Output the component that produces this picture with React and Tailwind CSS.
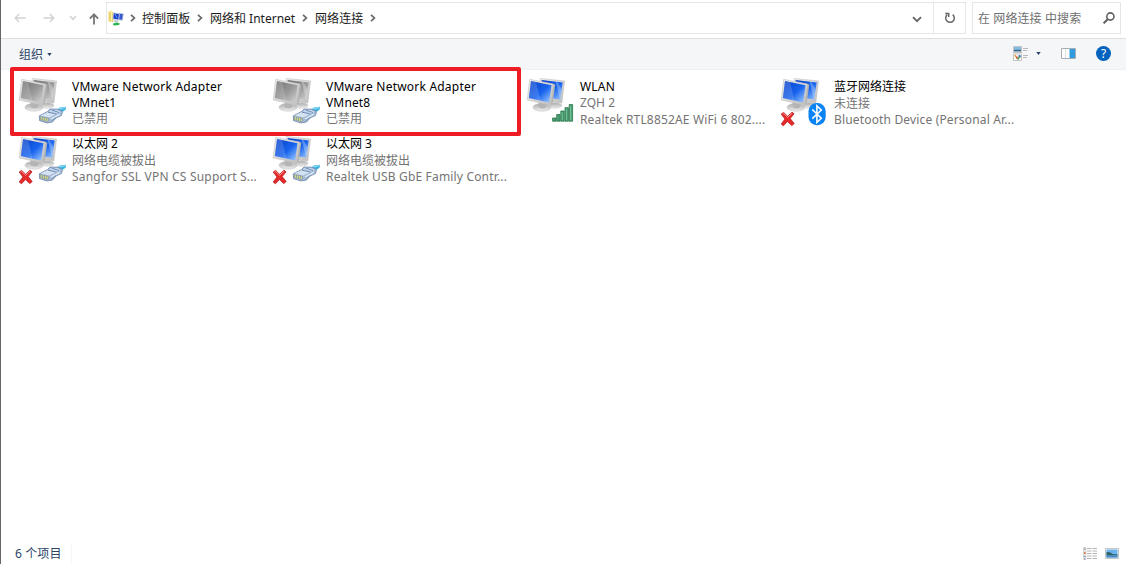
import React from "react";

const screens = {
  blue: { a: "#0a3fc4", b: "#1763ee", c: "#a6d0ff", glare: "#cfe2ff" },
  gray: { a: "#6f6f6f", b: "#9a9a9a", c: "#d6d6d6", glare: "#ececec" },
};

function Chevron({ className = "" }) {
  return (
    <svg viewBox="0 0 6 8" className={"h-2 w-1.5 shrink-0 " + className} fill="none" stroke="#666" strokeWidth="1.7">
      <path d="M1 .8 4.4 4 1 7.2" />
    </svg>
  );
}

function Plug() {
  return (
    <g strokeLinejoin="round">
      <path d="M38.5 34.5 41.5 31.5 48 30.8 47.6 33.8 43.5 36.5Z" fill="#3fb4e2" />
      <path d="M40 33.2 47 31.6" stroke="#9be2f7" strokeWidth="1" />
      <path d="M21.3 39.8 29.5 35.5 32 33 40 33.2 44.5 35.5 43.5 39.5 38 42 34.5 46 29 47 21.5 44.6Z" fill="#a5bbd8" stroke="#6d87aa" strokeWidth=".8" />
      <path d="M22.3 39.6 30 36 38.5 37.8 31.3 41.4Z" fill="#d5e2f1" />
      <path d="M32 34.2 39.4 34 43 36 38.6 37.4 31 35.6Z" fill="#c3d8ef" />
      <path d="M30 36.2 38.3 38M34 34.2 41 36.5" stroke="#5d7ca8" strokeWidth=".8" fill="none" />
      <path d="M22 40.2 31 41.9 30.4 46 22.2 44Z" fill="#8d9f9d" />
      <path d="M23.4 41.2v2.5M25.4 41.6v2.7M27.4 42v2.8M29.3 42.4v2.8" stroke="#dce182" strokeWidth="1" />
      <path d="m33 43 8.8-4.7" stroke="#e6f0fa" strokeWidth="1.3" />
      <path d="m33.5 45 4.5-3.6" stroke="#7692b7" strokeWidth=".8" />
    </g>
  );
}

function Monitors({ tone, badge, cross, id }) {
  const c = screens[tone];
  return (
    <svg viewBox="0 0 50 51" className="h-[51px] w-[50px] shrink-0">
      <defs>
        <linearGradient id={id + "s"} x1="0" y1="0" x2="1" y2="1">
          <stop offset="0" stopColor={c.a} />
          <stop offset=".55" stopColor={c.b} />
          <stop offset="1" stopColor={c.c} />
        </linearGradient>
        <linearGradient id={id + "f"} x1="0" y1="0" x2="1" y2="1">
          <stop offset="0" stopColor="#f0f0f0" />
          <stop offset="1" stopColor="#bdbdbd" />
        </linearGradient>
        <linearGradient id={id + "b"} x1="0" y1="0" x2="0" y2="1">
          <stop offset="0" stopColor="#aaa" />
          <stop offset="1" stopColor="#eee" />
        </linearGradient>
      </defs>
      <ellipse cx="29" cy="29.5" rx="7" ry="2.8" fill={"url(#" + id + "b)"} stroke="#ccc" strokeWidth=".5" />
      <path d="M14.2 2.5 38.6 5 35.8 27 26 26 14 20Z" fill={"url(#" + id + "f)"} stroke="#c0c0c0" strokeWidth=".6" strokeLinejoin="round" />
      <path d="M15.6 3.9 36.7 6.4 34.2 23.6 16 21Z" fill={"url(#" + id + "s)"} />
      <path d="m29.5 5.6 2 .3 4.2 7.5-1.5 10.2Z" fill={c.glare} opacity=".35" />
      <ellipse cx="16" cy="31.3" rx="9" ry="3.9" fill={"url(#" + id + "b)"} stroke="#c4c4c4" strokeWidth=".6" />
      <path d="m12.5 25 8 2-.8 4.8c-2 1-5.4.5-6.7-.5Z" fill="#b4b4b4" />
      <path d="m27.3 8 2 .6-2.7 19.6-2.2.8Z" fill="#b2b2b2" />
      <path d="M3.7 3.3 27.5 8 24.8 29 1.2 24Z" fill={"url(#" + id + "f)"} stroke="#c4c4c4" strokeWidth=".6" strokeLinejoin="round" />
      <path d="M5 5 25.5 9.3 23.1 26.5 2.9 22Z" fill={"url(#" + id + "s)"} />
      <path d="M5 5 10 6.1 14.5 24.6 2.9 22Z" fill={c.glare} opacity=".2" />
      {badge === "plug" && <Plug />}
      {badge === "signal" && (
        <g fill="#4aa074" stroke="#2a7549" strokeWidth=".8">
          <path d="M26.6 42h3.4v3.2h-3.4zM30.7 38.5h3.4v6.7h-3.4zM34.8 35h3.4v10.2h-3.4zM39 31.7h3.4v13.5H39zM43.2 28.6h3.4v16.6h-3.4z" />
          <path d="M36.2 36.3v8M40.4 33v11.3M44.6 29.9v14.4" stroke="#8bd0ac" strokeWidth=".7" />
        </g>
      )}
      {badge === "bluetooth" && (
        <g>
          <rect x="28.5" y="27" width="17.2" height="22.2" rx="8.2" fill="#0a84f5" />
          <path d="m32.3 33.5 9 8.8-4.4 4.2V29.8l4.4 4.2-9 8.6" fill="none" stroke="#fff" strokeWidth="1.6" />
        </g>
      )}
      {cross && (
        <g strokeLinejoin="round">
          <path d="M1.2 38 3.6 36.4 7.6 40.3 12 36.2 14 37.8 10.2 42.6 14.2 47.6 11.8 49.6 7.5 45.6 3.4 49.8 1.2 48 5 43Z" fill="#e62a2a" stroke="#bd1b1e" strokeWidth=".8" />
          <path d="m2.6 38 1-.6 4 3.9 4.3-4" fill="none" stroke="#f69a92" strokeWidth="1" />
        </g>
      )}
    </svg>
  );
}

function Adapter({ id, name, status, device, tone = "blue", badge, cross, wide, textClass = "pt-[2px]" }) {
  return (
    <div className="flex h-[58px] w-[254px] gap-1">
      <Monitors id={id} tone={tone} badge={badge} cross={cross} />
      <div className={"flex flex-col whitespace-pre text-[12px] leading-[16.5px] text-[#747474] " + textClass}>
        <div className="text-black">{name}</div>
        {wide && <div className="-mt-px tracking-[0.15px] text-black">{wide}</div>}
        <div>{status}</div>
        {device}
      </div>
    </div>
  );
}

export default function App() {
  return (
    <div className="relative flex h-[564px] w-[1126px] flex-col overflow-hidden border-l border-[#666] bg-white font-['Noto_Sans','Noto_Sans_CJK_SC',sans-serif] text-[12px]">
      <header className="flex h-[39px] shrink-0 items-start border-b border-[#dcdfe2] pt-[2px]">
        <div className="flex h-8 w-[105px] items-center pl-[13px]">
          <svg viewBox="0 0 12 10" className="h-2.5 w-3" fill="none" stroke="#d2d2d2" strokeWidth="1.5"><path d="M11.5 5H1.2M5.2 1 1.2 5l4 4" /></svg>
          <svg viewBox="0 0 12 10" className="ml-[17px] h-2.5 w-3" fill="none" stroke="#d2d2d2" strokeWidth="1.5"><path d="M.5 5h10.3M6.8 1l4 4-4 4" /></svg>
          <svg viewBox="0 0 8 6" className="ml-[14px] h-1.5 w-2" fill="none" stroke="#d2d2d2" strokeWidth="1.5"><path d="m1 1 3 3.3L7 1" /></svg>
          <svg viewBox="0 0 10 12" className="ml-3 mt-[2px] h-3 w-2.5" fill="none" stroke="#757575" strokeWidth="1.8"><path d="M5 11.6V1.5M.9 5.6 5 1.3l4.1 4.3" /></svg>
        </div>
        <div className="flex h-8 w-[860px] items-center border border-[#e6e6e6] pl-px text-[#1b1b1b]">
          <svg viewBox="0 0 16 16" className="-mt-px h-4 w-4 shrink-0">
            <path d="M.5 1.5 3.6.4 5.3 3v9L.5 11.4Z" fill="#ecd36d" />
            <path d="m1 2 2.5-.8v10" stroke="#fff0a7" fill="none" />
            <path d="m9.5 3.1 5.8.7-.8 6.4-4.8-.5Z" fill="#3359cd" stroke="#c8cfdf" strokeWidth=".8" />
            <path d="m5.4 2.8 6 1-.8 6.1-5.7-1Z" fill="#173ecb" stroke="#c8cfdf" strokeWidth=".9" />
            <path d="m7 4 2 4" stroke="#7ea3f2" strokeWidth=".9" />
            <ellipse cx="8" cy="11.2" rx="2.6" ry="1" fill="#bfc7d3" />
            <path d="m4.8 13.8 3.8-1.2 3.2.8-.8 1.7-5.2.3Z" fill="#25b24b" />
          </svg>
          <Chevron className="ml-[6px]" />
          <span className="ml-[6px] w-[49px] pt-[2px] tracking-[0.1px]">控制面板</span>
          <Chevron className="ml-[6px]" />
          <span className="ml-[7px] w-[86px] whitespace-pre pt-[2px]">网络和 Internet</span>
          <Chevron className="ml-[6px]" />
          <span className="ml-[7px] w-[49px] pt-[2px] tracking-[0.1px]">网络连接</span>
          <Chevron className="ml-[6px]" />
          <div className="ml-auto flex h-full items-center">
            <svg viewBox="0 0 10 7" className="mr-[11px] mt-[2px] h-[7px] w-2.5" fill="none" stroke="#666" strokeWidth="1.9"><path d="m1 1.2 4 4 4-4" /></svg>
            <div className="flex h-full w-8 items-center justify-center border-l border-[#e6e6e6]">
              <svg viewBox="0 0 12 12" className="h-3 w-3" fill="none" stroke="#666" strokeWidth="1.5"><path d="M8.7 2.7a4.3 4.3 0 1 1-5.5.1M1.2 1.4h3.5v3.5" /></svg>
            </div>
          </div>
        </div>
        <div className="ml-[6px] flex h-8 w-[149px] items-center justify-between border border-[#e6e6e6] pl-[5px] pr-[5px] text-[#707070]">
          <span className="whitespace-pre pt-[2px] tracking-[0.1px]">在 网络连接 中搜索</span>
          <svg viewBox="0 0 12 12" className="h-3 w-3" fill="none" stroke="#606060" strokeWidth="1.6"><circle cx="7.4" cy="4.5" r="3.6" /><path d="M4.7 7.2.6 11.3" strokeWidth="2.1" /></svg>
        </div>
      </header>

      <div className="flex h-[31px] shrink-0 items-center border-b border-[#eff1f3] bg-[#f4f6f8] pl-[18px] text-[#294466]">
        <span className="pt-px">组织</span>
        <svg viewBox="0 0 5 3" className="ml-1 h-[3px] w-[5px]"><path d="M.3 0h4.4L2.5 3Z" fill="#294466" /></svg>
        <div className="-mt-px ml-auto flex items-center pr-[15px]">
          <svg viewBox="0 0 15 15" className="h-[15px] w-[15px]">
            <path d="M.5.5h8v6h-8zM.5 8h8v6.5h-8z" fill="#fff" stroke="#c2c2c2" />
            <path d="M1 1h7v2.5H1z" fill="#7fc0ea" /><path d="M1 3.5h7v2H1z" fill="#356a8b" />
            <path d="m1.8 9 2.4 3.2" stroke="#e0a23c" strokeWidth="1.6" /><path d="m7.5 10-3 3.4" stroke="#44a14c" strokeWidth="1.5" /><path d="M5.5 9h2v2h-2z" fill="#4a79cf" /><path d="M3 10.7h1.8v1.8H3z" fill="#d9503c" />
            <path d="M10 2.5h5M10 4.5h4M10 9.5h5M10 11.5h4" stroke="#aaa" strokeWidth=".8" />
          </svg>
          <svg viewBox="0 0 5 3" className="ml-[8px] h-[3px] w-[5px]"><path d="M.3 0h4.4L2.5 3Z" fill="#294466" /></svg>
          <svg viewBox="0 0 15 11" className="ml-5 h-[11px] w-[15px]"><path d="M.5.5h14v10H.5z" fill="#fff" stroke="#a5adb5" /><path d="M8.5 1H14v9H8.5z" fill="#329be0" /><path d="M4.5 1v9" stroke="#dfdfdf" /></svg>
          <div className="ml-[20px] flex h-[15px] w-[15px] items-center justify-center rounded-full bg-[#0562bd] text-[12px] leading-none text-white">?</div>
        </div>
      </div>

      <main className="grid grow grid-cols-[repeat(4,254px)] content-start pl-[17px] pt-[6px]">
        <Adapter id="a" tone="gray" badge="plug" textClass="pt-[3px]" name={<span className="tracking-[0.21px]">VMware Network Adapter</span>} wide="VMnet1" status="已禁用" />
        <Adapter id="b" tone="gray" badge="plug" textClass="pt-[3px]" name={<span className="tracking-[0.21px]">VMware Network Adapter</span>} wide="VMnet8" status="已禁用" />
        <Adapter id="c" badge="signal" name={<span className="tracking-[0.2px]">WLAN</span>} status="ZQH 2" textClass="pt-[2.5px]" device={<div className="tracking-[0.16px]">Realtek RTL8852AE WiFi 6 802....</div>} />
        <Adapter id="d" badge="bluetooth" cross textClass="pt-[3px]" name="蓝牙网络连接" status="未连接" device={<div className="tracking-[0.16px]">Bluetooth Device (Personal Ar...</div>} />
        <Adapter id="e" badge="plug" cross name="以太网 2" status="网络电缆被拔出" device={<div className="tracking-[0.2px]">Sangfor SSL VPN CS Support S...</div>} />
        <Adapter id="f" badge="plug" cross name="以太网 3" status="网络电缆被拔出" device={<div className="tracking-[0.17px]">Realtek USB GbE Family Contr...</div>} />
      </main>

      <footer className="flex h-[22px] shrink-0 items-center pl-[14px] pr-[7px] text-[#294466]">
        <span className="w-[57px] whitespace-pre border-r border-[#f5f5f5] pt-[2px] tracking-[0.1px]">6 个项目</span>
        <svg viewBox="0 0 14 13" className="ml-auto h-[13px] w-[14px]">
          <path d="M.5.5h2.4v12H.5z" fill="#e4e4e4" stroke="#c1c1c1" strokeWidth=".6" />
          <path d="M1 2h1.5M1 9.5h1.5M1 12h1.5" stroke="#7895a8" /><path d="M1 6h1.5" stroke="#e05820" strokeWidth="1.4" />
          <path d="M4 1.5h10M4 4h10M4 6.5h10M4 9h10M4 11.5h10" stroke="#aaa" strokeWidth=".9" strokeDasharray="4.5 1" />
        </svg>
        <svg viewBox="0 0 14 11" className="ml-2 h-[11px] w-[14px]"><path d="M.5.5h13v10H.5z" fill="#fff" stroke="#c4c4c4" /><path d="M1.5 1.5h11v8h-11z" fill="#69b2ec" /><path d="M1.5 4 5 4.3l3 1.9h4.5v1.3h-11Z" fill="#2f6266" /><path d="M1.5 7.5h11v2h-11z" fill="#488bc3" /></svg>
      </footer>

      <div className="pointer-events-none absolute left-[9px] top-[67px] h-[69px] w-[511px] rounded-[2px] border-4 border-[#ee1c25]" />
    </div>
  );
}
